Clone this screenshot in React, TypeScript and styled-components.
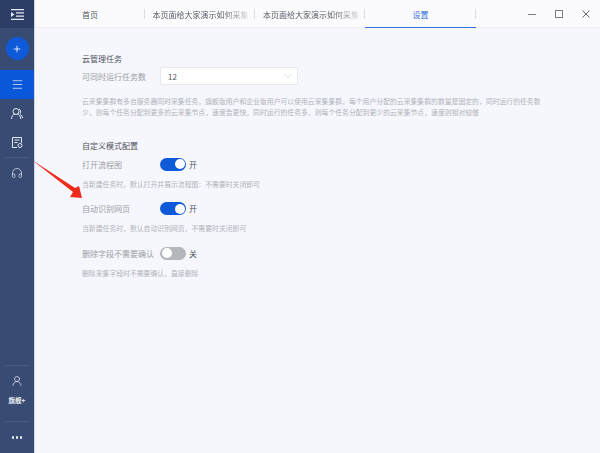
import { createGlobalStyle, styled } from 'styled-components';
import { Plus, Menu, ChevronDown, Headphones, UserRound } from 'lucide-react';

const GlobalStyle = createGlobalStyle`
  html, body {
    margin: 0;
    padding: 0;
    height: 100%;
    overflow: hidden;
    font-family: "Noto Sans CJK SC", "Noto Sans", sans-serif;
  }
  #root {
    height: 100%;
  }
`;

const Page = styled.div`
  position: relative;
  display: flex;
  width: 600px;
  height: 453px;
  background-color: #f6f7fc;
  overflow: hidden;
`;

const Sidebar = styled.aside`
  width: 34px;
  flex: none;
  display: flex;
  flex-direction: column;
  align-items: center;
  background-color: #384b72;
  color: #e4e9f3;
`;

const SideTop = styled.div`
  width: 100%;
  height: 28px;
  flex: none;
  background-color: #2c3d66;
  display: flex;
  align-items: center;
  justify-content: center;
`;

const AddButton = styled.div`
  width: 23px;
  height: 23px;
  flex: none;
  border-radius: 50%;
  margin: 9px 0 10px;
  background-color: #0f5ad8;
  color: #fff;
  display: flex;
  align-items: center;
  justify-content: center;
`;

const SideItem = styled.div<{ $active?: boolean }>`
  width: 100%;
  height: 29px;
  flex: none;
  display: flex;
  align-items: center;
  justify-content: center;
  background-color: ${(p) => (p.$active ? '#0b57d9' : 'transparent')};
`;

const SideLine = styled.div`
  width: 24px;
  height: 1px;
  flex: none;
  background-color: #4a5c82;
`;

const Spacer = styled.div`
  flex: 1;
`;

const PlanLabel = styled.div`
  font-size: 6.5px;
  font-weight: 700;
  color: #eef1f8;
  line-height: 10px;
  margin-bottom: 16px;
`;

const Dots = styled.div`
  height: 31px;
  display: flex;
  align-items: center;
  gap: 1.5px;

  &::before,
  &::after,
  span {
    content: '';
    width: 2.5px;
    height: 2.5px;
    border-radius: 50%;
    background-color: #eef1f8;
  }
`;

const Main = styled.main`
  flex: 1;
  min-width: 0;
  display: flex;
  flex-direction: column;
  border-left: 1px solid #cfd4e0;
`;

const TabBar = styled.header`
  height: 28px;
  flex: none;
  display: flex;
  background-color: #fbfbfd;
  box-shadow: inset 0 -1px 0 #eeeff3;
`;

const Tab = styled.div<{ $active?: boolean; $first?: boolean }>`
  position: relative;
  width: ${(p) => (p.$first ? '109.6px' : '110.4px')};
  box-sizing: border-box;
  padding-left: ${(p) => (p.$active ? '0' : p.$first ? '47px' : '8px')};
  display: flex;
  align-items: center;
  justify-content: ${(p) => (p.$active ? 'center' : 'flex-start')};
  font-size: 8px;
  color: ${(p) => (p.$active ? '#2f6fdb' : '#555a63')};
  box-shadow: ${(p) => (p.$active ? 'inset 0 -1px 0 #2f6fdb' : 'none')};

  &::after {
    content: '';
    position: absolute;
    right: 0;
    top: 9px;
    height: 10px;
    width: 1px;
    background-color: #dcdee4;
  }
`;

const TabTitle = styled.span`
  width: 96px;
  white-space: nowrap;
  overflow: hidden;
  -webkit-mask-image: linear-gradient(to right, #000 72%, rgba(0, 0, 0, 0.15) 100%);
  mask-image: linear-gradient(to right, #000 72%, rgba(0, 0, 0, 0.15) 100%);
`;

const WindowControls = styled.div`
  margin-left: auto;
  display: flex;
  padding-right: 1px;
`;

const ControlButton = styled.div`
  width: 27px;
  display: flex;
  align-items: center;
  justify-content: center;
`;

const Content = styled.section`
  padding: 25px 0 0 47px;
`;

const SectionTitle = styled.h3`
  margin: 0;
  font-size: 8px;
  font-weight: 400;
  line-height: 12px;
  color: #50545c;
`;

const SelectRow = styled.div`
  display: flex;
  align-items: center;
  height: 22px;
`;

const ToggleRow = styled.div`
  display: flex;
  align-items: center;
  height: 20px;
  margin-top: 2px;
`;

const Label = styled.span`
  width: 78px;
  flex: none;
  font-size: 8px;
  color: #9a9da5;
  white-space: nowrap;
`;

const Select = styled.div`
  width: 138px;
  height: 18px;
  box-sizing: border-box;
  padding: 0 3px 0 7px;
  display: flex;
  align-items: center;
  justify-content: space-between;
  font-size: 8px;
  color: #555a63;
  background-color: #fff;
  border: 1px solid #e6e8ee;
  border-radius: 2px;
`;

const Description = styled.p`
  margin: 8.5px 0 22.5px;
  font-size: 6.85px;
  line-height: 11px;
  color: #b0b3ba;
  white-space: nowrap;
`;

const Hint = styled.p`
  margin: 4.5px 0 9px;
  font-size: 6.85px;
  line-height: 11px;
  color: #b0b3ba;
  white-space: nowrap;
`;

const Toggle = styled.div<{ $on?: boolean }>`
  width: 26px;
  height: 13px;
  box-sizing: border-box;
  padding: 1.5px;
  border-radius: 7px;
  display: flex;
  justify-content: ${(p) => (p.$on ? 'flex-end' : 'flex-start')};
  background-color: ${(p) => (p.$on ? '#0f5ad8' : '#b4b6bc')};

  &::before {
    content: '';
    width: 10px;
    height: 10px;
    border-radius: 50%;
    background-color: #fff;
  }
`;

const ToggleText = styled.span`
  margin-left: 3px;
  font-size: 8px;
  color: #50545c;
`;

const Arrow = styled.svg`
  position: absolute;
  left: 30px;
  top: 158px;
`;

const settings = [
  { label: '打开流程图', on: true, hint: '当新建任务时\uFF0C默认打开并展示流程图\uFF1A不需要时关闭即可' },
  { label: '自动识别网页', on: true, hint: '当新建任务时\uFF0C默认自动识别网页\uFF0C不需要时关闭即可' },
  { label: '删除字段不需要确认', on: false, hint: '删除采集字段时不需要确认\uFF0C直接删除' },
];

const descriptionLines = [
  '云采集集群有多台服务器同时采集任务\uFF0C旗舰版用户和企业版用户可以使用云采集集群\uFF0C每个用户分配的云采集集群的数量是固定的\uFF0C同时运行的任务数',
  '少\uFF0C则每个任务分配到更多的云采集节点\uFF0C速度会更快\uFF0C同时运行的任务多\uFF0C则每个任务分配到更少的云采集节点\uFF0C速度则相对较慢',
];

function CollapseIcon() {
  return (
    <svg width="13" height="11" viewBox="0 0 13 11" fill="none" stroke="#e4e9f3" strokeWidth="1.2">
      <path d="M0 .6h13M5 3.8h8M5 7.2h8M0 10.4h13" />
      <path d="M0 3 3.5 5.5 0 8z" fill="#e4e9f3" stroke="none" />
    </svg>
  );
}

function TeamIcon() {
  return (
    <svg width="14" height="14" viewBox="0 0 14 14" fill="none" stroke="#e4e9f3" strokeWidth="1">
      <circle cx="6" cy="4.5" r="3" />
      <path d="M1.5 12c0-2.8 1.6-4.6 3.4-5M7.2 7c1.8.4 3.4 2.2 3.6 5" />
      <path d="M9 2c1.6.5 2.3 2.8 1 4.6M10 7.5c1.4.6 2.4 2 2.6 3.6" />
    </svg>
  );
}

function TaskIcon() {
  return (
    <svg width="13" height="13" viewBox="0 0 13 13" fill="none" stroke="#e4e9f3" strokeWidth="1">
      <path d="M6 11.5H1.5v-10h9v5.5" />
      <path d="M3.5 4h5M3.5 6.5h3" />
      <circle cx="9" cy="9.5" r="2" />
    </svg>
  );
}

function MinimizeIcon() {
  return (
    <svg width="8" height="8" viewBox="0 0 8 8" stroke="#7a7d85" strokeWidth="1">
      <path d="M0 4.5h8" />
    </svg>
  );
}

function MaximizeIcon() {
  return (
    <svg width="8" height="8" viewBox="0 0 8 8" fill="none" stroke="#7a7d85" strokeWidth="1">
      <rect x=".5" y=".5" width="7" height="7" />
    </svg>
  );
}

function CloseIcon() {
  return (
    <svg width="8" height="8" viewBox="0 0 8 8" stroke="#6a6d75" strokeWidth="1">
      <path d="M.5.5l7 7M7.5.5l-7 7" />
    </svg>
  );
}

export default function App() {
  return (
    <>
      <GlobalStyle />
      <Page>
        <Sidebar>
          <SideTop>
            <CollapseIcon />
          </SideTop>
          <AddButton>
            <Plus size={10} strokeWidth={2} />
          </AddButton>
          <SideItem $active>
            <Menu size={13} strokeWidth={1.4} />
          </SideItem>
          <SideItem>
            <TeamIcon />
          </SideItem>
          <SideItem>
            <TaskIcon />
          </SideItem>
          <SideLine />
          <SideItem>
            <Headphones size={12} strokeWidth={1.4} />
          </SideItem>
          <Spacer />
          <SideLine />
          <SideItem>
            <UserRound size={12} strokeWidth={1.4} />
          </SideItem>
          <PlanLabel>旗舰+</PlanLabel>
          <SideLine />
          <Dots>
            <span />
          </Dots>
        </Sidebar>
        <Main>
          <TabBar>
            <Tab $first>首页</Tab>
            <Tab>
              <TabTitle>本页面给大家演示如何采集</TabTitle>
            </Tab>
            <Tab>
              <TabTitle>本页面给大家演示如何采集</TabTitle>
            </Tab>
            <Tab $active>设置</Tab>
            <WindowControls>
              <ControlButton>
                <MinimizeIcon />
              </ControlButton>
              <ControlButton>
                <MaximizeIcon />
              </ControlButton>
              <ControlButton>
                <CloseIcon />
              </ControlButton>
            </WindowControls>
          </TabBar>
          <Content>
            <SectionTitle>云管理任务</SectionTitle>
            <SelectRow>
              <Label>可同时运行任务数</Label>
              <Select>
                12
                <ChevronDown size={12} strokeWidth={1} color="#b8bac0" />
              </Select>
            </SelectRow>
            <Description>
              {descriptionLines[0]}
              <br />
              {descriptionLines[1]}
            </Description>
            <SectionTitle>自定义模式配置</SectionTitle>
            {settings.map((s) => (
              <div key={s.label}>
                <ToggleRow>
                  <Label>{s.label}</Label>
                  <Toggle $on={s.on} />
                  <ToggleText>{s.on ? '开' : '关'}</ToggleText>
                </ToggleRow>
                <Hint>{s.hint}</Hint>
              </div>
            ))}
          </Content>
        </Main>
        <Arrow width="54" height="42" viewBox="0 0 54 42">
          <path d="M2 2 45 30 49 28 52 40 40 39 43 34Z" fill="#ee2a1b" />
        </Arrow>
      </Page>
    </>
  );
}
